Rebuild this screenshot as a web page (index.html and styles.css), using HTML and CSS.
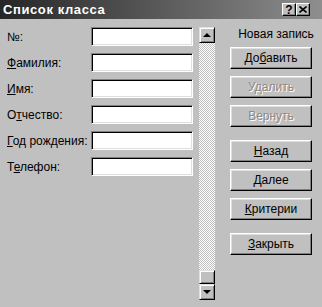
FILE: index.html
```html
<!DOCTYPE html>
<html lang="ru">
<head>
    <meta charset="UTF-8">
    <title>Список класса</title>
    <link rel="stylesheet" href="styles.css">
</head>
<body>
    <div class="window">
        <!-- Title bar -->
        <div class="titlebar">
            <span class="title">Список класса</span>
            <div class="title-buttons">
                <span class="tbtn">?</span>
                <span class="tbtn">
                    <svg width="8" height="7" viewBox="0 0 8 7">
                        <path d="M0.5 0.5 L7.5 6.5 M7.5 0.5 L0.5 6.5" stroke="#000" stroke-width="1.6" fill="none"/>
                    </svg>
                </span>
            </div>
        </div>

        <div class="dialog">
            <!-- Record fields -->
            <div class="fields">
                <div class="row"><label>№:</label><input class="field" type="text"></div>
                <div class="row"><label><u>Ф</u>амилия:</label><input class="field" type="text"></div>
                <div class="row"><label><u>И</u>мя:</label><input class="field" type="text"></div>
                <div class="row"><label>О<u>т</u>чество:</label><input class="field" type="text"></div>
                <div class="row"><label><u>Г</u>од рождения:</label><input class="field" type="text"></div>
                <div class="row"><label>Т<u>е</u>лефон:</label><input class="field" type="text"></div>
            </div>

            <!-- Record scrollbar -->
            <div class="scrollbar">
                <div class="sb-btn"><span class="arrow-up"></span></div>
                <div class="sb-track"></div>
                <div class="sb-btn sb-thumb"></div>
                <div class="sb-btn"><span class="arrow-down"></span></div>
            </div>

            <!-- Actions -->
            <div class="actions">
                <div class="caption">Новая запись</div>
                <button class="btn">До<u>б</u>авить</button>
                <button class="btn" disabled>Удалить</button>
                <button class="btn" disabled>Вернуть</button>
                <button class="btn group"><u>Н</u>азад</button>
                <button class="btn"><u>Д</u>алее</button>
                <button class="btn"><u>К</u>ритерии</button>
                <button class="btn group"><u>З</u>акрыть</button>
            </div>
        </div>
    </div>
</body>
</html>
```

FILE: styles.css
```css
* {
    box-sizing: border-box;
}

body {
    margin: 0;
    font-family: 'Liberation Sans', Arial, sans-serif;
    font-size: 12px;
    color: #000;
    background: #c0c0c0;
}

.window {
    width: 322px;
    height: 307px;
    background: #c0c0c0;
}

.titlebar {
    height: 19px;
    padding: 0 12px 0 3px;
    display: flex;
    justify-content: space-between;
    align-items: center;
    background: linear-gradient(to right, #262626, #8e8e8e);
}

.title {
    color: #fff;
    font-weight: 700;
    font-size: 13px;
    letter-spacing: 0.6px;
}

.title-buttons {
    display: flex;
}

.tbtn {
    width: 14px;
    height: 13px;
    display: flex;
    align-items: center;
    justify-content: center;
    font-size: 12px;
    font-weight: 700;
    line-height: 1;
    background: #c0c0c0;
    border-top: 1px solid #fff;
    border-left: 1px solid #fff;
    border-right: 1px solid #000;
    border-bottom: 1px solid #000;
    box-shadow: inset -1px -1px #808080;
}

.dialog {
    display: flex;
    align-items: flex-start;
    padding: 8px 0 0 7px;
}

/* left column: label + text box */
.fields {
    width: 186px;
    display: flex;
    flex-direction: column;
    gap: 7px;
}

.row {
    display: flex;
    align-items: center;
    height: 19px;
}

.row label {
    width: 84px;
    white-space: nowrap;
}

.field {
    width: 102px;
    height: 19px;
    margin: 0;
    padding: 0 3px;
    font: inherit;
    background: #fff;
    border-top: 1px solid #808080;
    border-left: 1px solid #808080;
    border-right: 1px solid #fff;
    border-bottom: 1px solid #fff;
    box-shadow: inset 1px 1px #000, inset -1px -1px #dfdfdf;
    outline: none;
}

/* vertical scrollbar */
.scrollbar {
    width: 16px;
    height: 273px;
    margin-left: 6px;
    display: flex;
    flex-direction: column;
}

.sb-btn {
    height: 16px;
    flex: none;
    display: flex;
    align-items: center;
    justify-content: center;
    background: #c0c0c0;
    border-top: 1px solid #dfdfdf;
    border-left: 1px solid #dfdfdf;
    border-right: 1px solid #000;
    border-bottom: 1px solid #000;
    box-shadow: inset 1px 1px #fff, inset -1px -1px #808080;
}

.sb-thumb {
    height: 14px;
}

.sb-track {
    flex: 1;
    background: repeating-conic-gradient(#fff 0 25%, #c0c0c0 0 50%) 0 0 / 2px 2px;
}

.arrow-up,
.arrow-down {
    width: 0;
    height: 0;
    border-left: 4px solid transparent;
    border-right: 4px solid transparent;
}

.arrow-up {
    border-bottom: 4px solid #000;
}

.arrow-down {
    border-top: 4px solid #000;
}

/* right column buttons */
.actions {
    width: 82px;
    margin-left: 15px;
    display: flex;
    flex-direction: column;
    gap: 7px;
}

.caption {
    height: 14px;
    margin: 0 -6px -1px 4px;
    text-align: center;
    white-space: nowrap;
}

.btn {
    height: 22px;
    margin: 0;
    padding: 0;
    font: inherit;
    color: #000;
    background: #c0c0c0;
    border-top: 1px solid #fff;
    border-left: 1px solid #fff;
    border-right: 1px solid #000;
    border-bottom: 1px solid #000;
    box-shadow: inset -1px -1px #808080, inset 1px 1px #dfdfdf;
}

.btn:disabled {
    color: #8a8a8a;
    text-shadow: 1px 1px #fff;
}

.btn.group {
    margin-top: 6px;
}
```
